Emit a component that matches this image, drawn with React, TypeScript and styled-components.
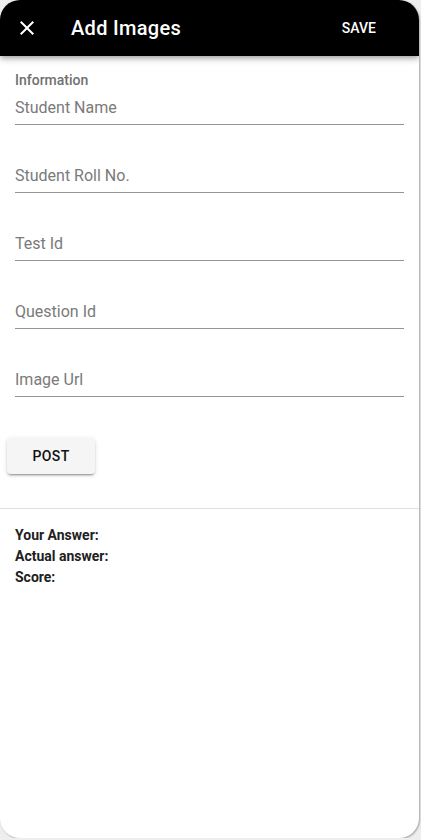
import React from "react";
import styled, { createGlobalStyle } from "styled-components";

const GlobalStyle = createGlobalStyle`
    html, body {
        margin: 0;
        padding: 0;
        background: #eeeeee;
        font-family: Roboto, "Liberation Sans", sans-serif;
    }
    * {
        box-sizing: border-box;
    }
`;

const fields = [
    "Student Name",
    "Student Roll No.",
    "Test Id",
    "Question Id",
    "Image Url",
];

const CloseIcon = () => (
    <svg width="24" height="24" viewBox="0 0 24 24" fill="#fff">
        <path d="M19 6.41L17.59 5 12 10.59 6.41 5 5 6.41 10.59 12 5 17.59 6.41 19 12 13.41 17.59 19 19 17.59 13.41 12z" />
    </svg>
);

export default function App() {
    return (
        <>
            <GlobalStyle />
            <Card>
                <Header>
                    <IconButton aria-label="close">
                        <CloseIcon />
                    </IconButton>
                    <Title>Add Images</Title>
                    <SaveButton>SAVE</SaveButton>
                </Header>
                <Form>
                    <SectionLabel>Information</SectionLabel>
                    {fields.map((name, i) => (
                        <Field key={name} $first={i === 0}>
                            <Input type="text" placeholder={name} />
                        </Field>
                    ))}
                </Form>
                <ButtonRow>
                    <PostButton>POST</PostButton>
                </ButtonRow>
                <Divider />
                <Results>
                    <ResultLine>Your Answer:</ResultLine>
                    <ResultLine>Actual answer:</ResultLine>
                    <ResultLine>Score:</ResultLine>
                </Results>
            </Card>
        </>
    );
}

const Card = styled.div`
    width: 419px;
    height: 838px;
    background: #fff;
    border-radius: 20px;
    overflow: hidden;
    box-shadow: 1px 1px 2px rgba(0, 0, 0, 0.3);
    display: flex;
    flex-direction: column;
`;

const Header = styled.header`
    height: 56px;
    flex-shrink: 0;
    background: #000;
    color: #fff;
    display: flex;
    align-items: center;
    padding: 0 15px;
    box-shadow: 0 2px 4px -1px rgba(0, 0, 0, 0.2), 0 4px 5px 0 rgba(0, 0, 0, 0.14),
        0 1px 10px 0 rgba(0, 0, 0, 0.12);
    position: relative;
    z-index: 1;
`;

const IconButton = styled.button`
    width: 24px;
    height: 24px;
    padding: 0;
    border: 0;
    background: transparent;
    display: flex;
    align-items: center;
    justify-content: center;
    cursor: pointer;
`;

const Title = styled.h6`
    flex: 1;
    margin: 0 0 0 32px;
    font-size: 20px;
    font-weight: 500;
    letter-spacing: 0.3px;
`;

const SaveButton = styled.button`
    border: 0;
    background: transparent;
    color: #fff;
    font-family: inherit;
    font-size: 14px;
    font-weight: 500;
    letter-spacing: 0;
    padding: 6px 8px;
    margin-right: 20px;
    cursor: pointer;
`;

const Form = styled.div`
    padding: 15px 15px 0;
`;

const SectionLabel = styled.div`
    font-size: 14px;
    font-weight: 500;
    line-height: 19px;
    color: #707070;
`;

const Field = styled.div<{ $first?: boolean }>`
    margin-top: ${(p) => (p.$first ? "0" : "33px")};
    border-bottom: 1px solid rgba(0, 0, 0, 0.42);
`;

const Input = styled.input`
    display: block;
    width: 100%;
    height: 34px;
    padding: 0;
    border: 0;
    background: transparent;
    font-family: inherit;
    font-size: 16px;
    color: #212121;

    &::placeholder {
        color: #7a7a7a;
        opacity: 1;
    }

    &:focus {
        outline: none;
    }
`;

const ButtonRow = styled.div`
    padding: 41px 7px 0;
`;

const PostButton = styled.button`
    width: 88px;
    height: 36px;
    border: 0;
    border-radius: 4px;
    background: #f5f5f5;
    color: #111;
    font-family: inherit;
    font-size: 14px;
    font-weight: 500;
    letter-spacing: 0.4px;
    box-shadow: 0 3px 1px -2px rgba(0, 0, 0, 0.2), 0 2px 2px 0 rgba(0, 0, 0, 0.14),
        0 1px 5px 0 rgba(0, 0, 0, 0.12);
    cursor: pointer;
`;

const Divider = styled.hr`
    margin: 34px 0 0;
    border: 0;
    border-top: 1px solid #e0e0e0;
`;

const Results = styled.div`
    padding: 16px 15px 0;
`;

const ResultLine = styled.div`
    font-size: 14px;
    font-weight: 700;
    line-height: 21px;
    color: #212121;
`;
